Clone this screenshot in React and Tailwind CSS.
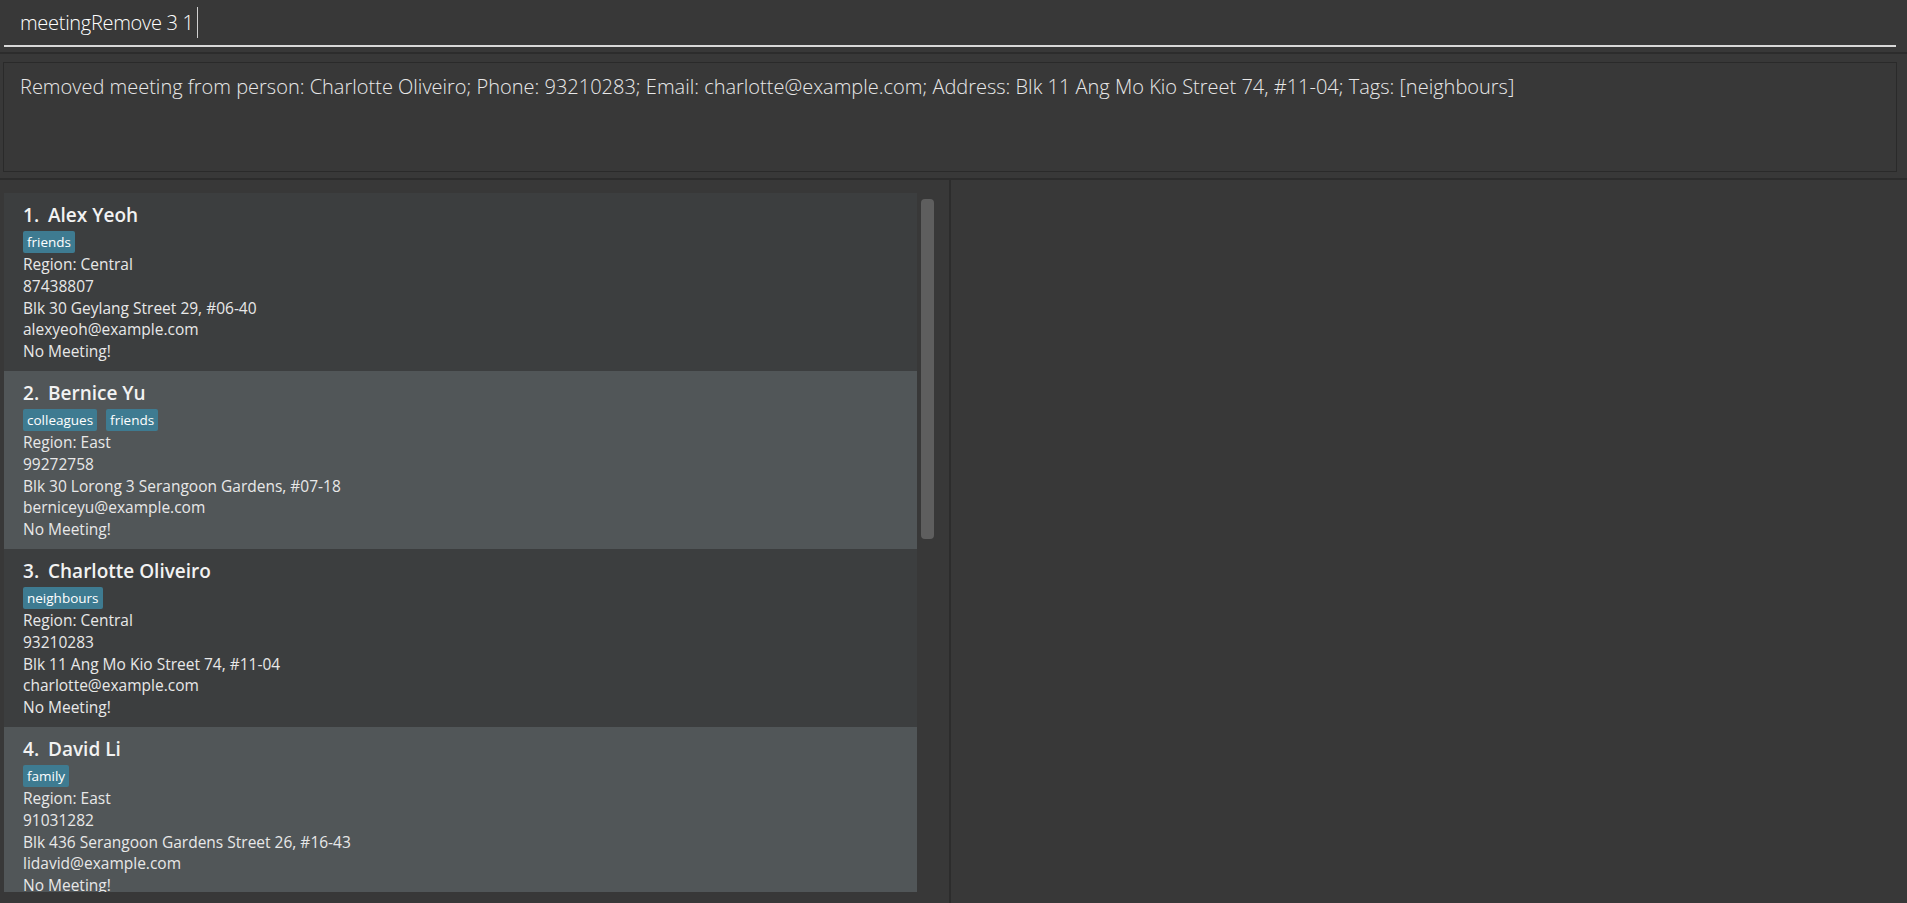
import React from 'react';

const persons = [
  {
    name: 'Alex Yeoh',
    tags: ['friends'],
    region: 'Central',
    phone: '87438807',
    address: 'Blk 30 Geylang Street 29, #06-40',
    email: 'alexyeoh@example.com',
  },
  {
    name: 'Bernice Yu',
    tags: ['colleagues', 'friends'],
    region: 'East',
    phone: '99272758',
    address: 'Blk 30 Lorong 3 Serangoon Gardens, #07-18',
    email: 'berniceyu@example.com',
  },
  {
    name: 'Charlotte Oliveiro',
    tags: ['neighbours'],
    region: 'Central',
    phone: '93210283',
    address: 'Blk 11 Ang Mo Kio Street 74, #11-04',
    email: 'charlotte@example.com',
  },
  {
    name: 'David Li',
    tags: ['family'],
    region: 'East',
    phone: '91031282',
    address: 'Blk 436 Serangoon Gardens Street 26, #16-43',
    email: 'lidavid@example.com',
  },
];

function PersonCard({ person, index }) {
  // alternate row colours like the list view
  const bg = index % 2 === 0 ? 'bg-[#3c3e3f]' : 'bg-[#515658]';
  return (
    <div className={`${bg} h-[178px] shrink-0 pl-[19px] pt-[10px] text-[#e8e8e8]`}>
      <div className="flex h-[24px] items-center text-[19px] leading-[24px] font-semibold text-[#f2f2f2]">
        <span className="w-[25px]">{index + 1}.</span>
        <span>{person.name}</span>
      </div>
      <div className="mt-[4px] flex h-[22px] gap-[9px]">
        {person.tags.map((t) => (
          <span
            key={t}
            className="flex h-[22px] items-center rounded-[2px] bg-[#3e7b91] px-[4px] text-[13.5px] font-medium text-white"
          >
            {t}
          </span>
        ))}
      </div>
      <div className="mt-[1px] text-[15.5px] leading-[21.8px]">
        <div>Region: {person.region}</div>
        <div>{person.phone}</div>
        <div>{person.address}</div>
        <div>{person.email}</div>
        <div>No Meeting!</div>
      </div>
    </div>
  );
}

export default function App() {
  return (
    <div
      className="flex h-[903px] w-full flex-col overflow-hidden bg-[#383838]"
      style={{ fontFamily: '"Open Sans", "Noto Sans", sans-serif' }}
    >
      {/* command box */}
      <div className="h-[52px] shrink-0 pl-[4px] pr-[11px]">
        <div className="flex h-[45px] items-center pl-[16px] text-[20px] font-light tracking-[-0.3px] text-white">
          <span>meetingRemove 3 1</span>
          <span className="ml-[3px] h-[31px] w-px bg-[#d0d0d0]" />
        </div>
        <div className="h-[2px] bg-[#d8d8d8]" />
      </div>
      <div className="h-[2px] shrink-0 bg-[#2c2c2c]" />

      {/* result display */}
      <div className="h-[124px] shrink-0 pl-[3px] pr-[10px] pt-[8px]">
        <div className="h-[110px] border border-[#2a2a2a] pl-[16px] pt-[10px] text-[20px] font-light leading-[28px] text-[#e8e8e8]">
          Removed meeting from person: Charlotte Oliveiro; Phone: 93210283; Email: charlotte@example.com; Address: Blk 11 Ang Mo Kio Street 74, #11-04; Tags: [neighbours]
        </div>
      </div>
      <div className="h-[2px] shrink-0 bg-[#2c2c2c]" />

      {/* list + detail */}
      <div className="flex min-h-0 flex-1">
        <div className="flex w-[949px] shrink-0 pb-[11px] pl-[4px] pt-[13px]">
          <div className="flex w-[913px] flex-col overflow-hidden">
            {persons.map((p, i) => (
              <PersonCard key={p.name} person={p} index={i} />
            ))}
          </div>
          <div className="ml-[4px] pt-[6px]">
            <div className="h-[340px] w-[13px] rounded-[4px] bg-[#5e5e5e]" />
          </div>
        </div>
        <div className="w-[2px] shrink-0 bg-[#2c2c2c]" />
        <div className="flex-1" />
      </div>
    </div>
  );
}
